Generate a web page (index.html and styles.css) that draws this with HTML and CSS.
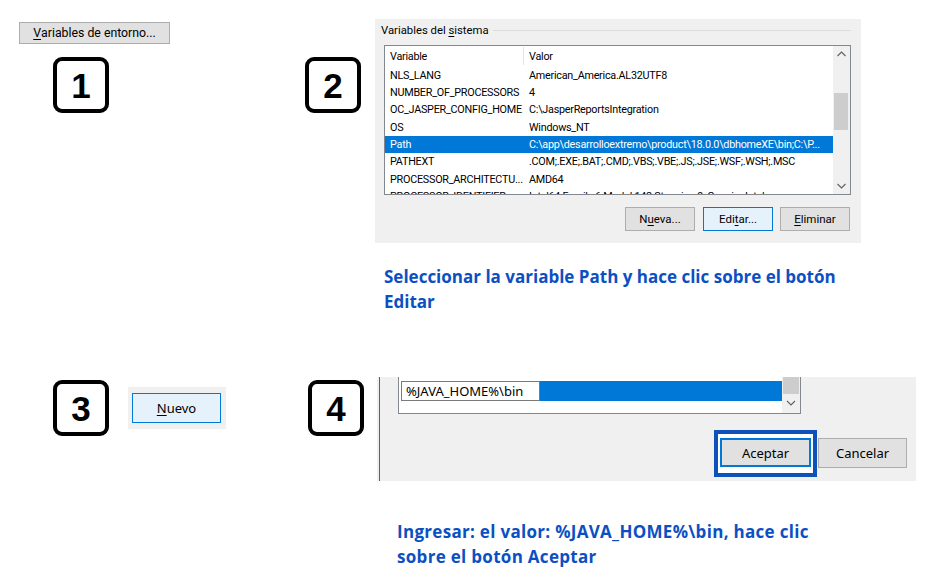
FILE: index.html
```html
<!DOCTYPE html>
<html lang="es">
<head>
<meta charset="utf-8">
<title>Variables de entorno</title>
<link rel="stylesheet" href="styles.css">
</head>
<body>
<div class="page">
  <div class="row1">
    <div class="col-a">
      <div class="win-btn env-btn"><u>V</u>ariables de entorno...</div>
      <div class="num one">1</div>
    </div>
    <div class="num two">2</div>
    <div class="col-c">
      <div class="panel-sys">
        <div class="group-head"><span class="group-title">Variables del <u>s</u>istema</span><span class="group-line"></span></div>
        <div class="listbox">
          <div class="list">
            <div class="lrow head"><span class="c1">Variable</span><span class="c2">Valor</span></div>
            <div class="lrow"><span class="c1">NLS_LANG</span><span class="c2">American_America.AL32UTF8</span></div>
            <div class="lrow"><span class="c1">NUMBER_OF_PROCESSORS</span><span class="c2">4</span></div>
            <div class="lrow"><span class="c1">OC_JASPER_CONFIG_HOME</span><span class="c2">C:\JasperReportsIntegration</span></div>
            <div class="lrow"><span class="c1">OS</span><span class="c2">Windows_NT</span></div>
            <div class="lrow sel"><span class="c1">Path</span><span class="c2">C:\app\desarrolloextremo\product\18.0.0\dbhomeXE\bin;C:\P...</span></div>
            <div class="lrow"><span class="c1">PATHEXT</span><span class="c2">.COM;.EXE;.BAT;.CMD;.VBS;.VBE;.JS;.JSE;.WSF;.WSH;.MSC</span></div>
            <div class="lrow"><span class="c1">PROCESSOR_ARCHITECTU...</span><span class="c2">AMD64</span></div>
            <div class="lrow"><span class="c1">PROCESSOR_IDENTIFIER</span><span class="c2">Intel64 Family 6 Model 142 Stepping 9, GenuineIntel</span></div>
          </div>
          <div class="vscroll">
            <svg class="chev" width="17" height="17" viewBox="0 0 17 17"><polyline points="4.5,10 8.5,6 12.5,10" fill="none" stroke="#606060" stroke-width="1.1"/></svg>
            <div class="thumb"></div>
            <div class="spacer"></div>
            <svg class="chev" width="17" height="17" viewBox="0 0 17 17"><polyline points="4.5,7 8.5,11 12.5,7" fill="none" stroke="#606060" stroke-width="1.1"/></svg>
          </div>
        </div>
        <div class="btn-row">
          <div class="win-btn sm">N<u>u</u>eva...</div>
          <div class="win-btn sm focus">Edi<u>t</u>ar...</div>
          <div class="win-btn sm"><u>E</u>liminar</div>
        </div>
      </div>
      <p class="caption cap1">Seleccionar la variable Path y hace clic sobre el botón Editar</p>
    </div>
  </div>
  <div class="row2">
    <div class="num three">3</div>
    <div class="nuevo-panel"><div class="win-btn focus nuevo"><u>N</u>uevo</div></div>
    <div class="num four">4</div>
    <div class="col-d">
      <div class="panel-ok">
        <div class="edge"></div>
        <div class="ok-body">
          <div class="listbox2">
            <div class="list2">
              <div class="edit-row"><span class="edit">%JAVA_HOME%\bin</span><span class="fill"></span></div>
            </div>
            <div class="vscroll2">
              <div class="thumb2"></div>
              <svg class="chev" width="18" height="17" viewBox="0 0 18 17"><polyline points="5,7 9,11 13,7" fill="none" stroke="#606060" stroke-width="1.1"/></svg>
            </div>
          </div>
          <div class="ok-row">
            <div class="ok-frame"><div class="win-btn big default">Aceptar</div></div>
            <div class="win-btn big cancel">Cancelar</div>
          </div>
        </div>
      </div>
      <p class="caption cap2">Ingresar: el valor: %JAVA_HOME%\bin, hace clic sobre el botón Aceptar</p>
    </div>
  </div>
</div>
</body>
</html>
```

FILE: styles.css
```css
* { box-sizing: border-box; }
html, body { margin: 0; padding: 0; background: #ffffff; }
.page {
  width: 931px;
  height: 578px;
  overflow: hidden;
  position: relative;
  font-family: Roboto, "Noto Sans", sans-serif;
  color: #000;
}
u { text-decoration: underline; text-underline-offset: 2px; }

.win-btn {
  display: flex;
  align-items: center;
  justify-content: center;
  background: #e1e1e1;
  border: 1px solid #adadad;
  font-size: 12px;
  color: #000;
  white-space: nowrap;
}
.win-btn.focus { background: #e5f1fb; border-color: #0078d7; }

.num {
  width: 56px;
  height: 56px;
  border: 4px solid #000;
  border-radius: 9px;
  display: flex;
  align-items: center;
  justify-content: center;
  font-family: "Liberation Sans", Arial, sans-serif;
  font-weight: bold;
  font-size: 35px;
  line-height: 1;
  flex: none;
}

/* row 1 */
.row1 { display: flex; height: 377px; }
.col-a { width: 305px; padding: 22px 0 0 19px; flex: none; }
.env-btn { width: 151px; height: 22px; font-size: 12.3px; }
.num.one { margin: 13px 0 0 34px; }
.num.two { margin-top: 57px; }
.col-c { margin-left: 14px; padding-top: 19px; }

.panel-sys {
  width: 486px;
  height: 224px;
  background: #f0f0f0;
  padding: 0 10px 0 0;
  display: flex;
  flex-direction: column;
}
.group-head { display: flex; align-items: center; height: 22px; padding-left: 6px; }
.group-title { font-size: 11.3px; padding-right: 4px; }
.group-line { flex: 1; height: 1px; background: #dcdcdc; margin-top: 1px; }

.listbox {
  margin: 4px 0 0 9px;
  width: 467px;
  height: 150px;
  background: #fff;
  border: 1px solid #828790;
  display: flex;
  overflow: hidden;
}
.list { flex: 1; min-width: 0; overflow: hidden; font-size: 10.8px; letter-spacing: -0.25px; }
.lrow { display: flex; height: 17.33px; align-items: center; white-space: nowrap; }
.lrow.head { height: 20.5px; }
.lrow.head .c1 { border-right: 1px solid #e5e5e5; height: 18px; display: flex; align-items: center; }
.c1 { width: 139px; padding-left: 5px; flex: none; overflow: hidden; }
.c2 { padding-left: 5px; flex: 1; min-width: 0; overflow: hidden; }
.lrow.sel { background: #0078d7; color: #fff; }

.vscroll { width: 17px; background: #f0f0f0; display: flex; flex-direction: column; flex: none; }
.chev { display: block; flex: none; }
.thumb { margin: 30px 2px 0 1px; height: 37px; background: #cdcdcd; }
.spacer { flex: 1; }

.btn-row { display: flex; justify-content: flex-end; gap: 8px; margin-top: 12px; padding-right: 1px; }
.win-btn.sm { width: 70px; height: 24px; font-size: 11.5px; }
.btn-row .win-btn.sm:last-child { margin-left: -1px; }

.caption {
  margin: 0;
  font-family: "Open Sans", "Noto Sans", sans-serif;
  font-weight: bold;
  font-size: 17px;
  line-height: 25px;
  color: #0b50c3;
}
.cap1 { margin: 21px 0 0 9px; width: 472px; }
.cap2 { margin: 38px 0 0 20px; width: 440px; letter-spacing: 0.3px; }

/* row 2 */
.row2 { display: flex; align-items: flex-start; }
.num.three { margin: 3px 0 0 53px; }
.nuevo-panel {
  margin: 10px 0 0 19px;
  width: 98px;
  height: 42px;
  background: #f0f0f0;
  padding: 6px 0 0 4px;
  flex: none;
}
.win-btn.nuevo { width: 89px; height: 30px; font-size: 13px; font-family: "Noto Sans", sans-serif; }
.num.four { margin: 3px 0 0 82px; }
.col-d { margin-left: 13px; }

.panel-ok {
  width: 539px;
  height: 104px;
  background: #f0f0f0;
  display: flex;
  font-family: "Noto Sans", sans-serif;
}
.edge { width: 1px; background: #0078d7; margin-left: 2px; flex: none; }
.ok-body { flex: 1; display: flex; flex-direction: column; padding-left: 18px; }
.listbox2 {
  width: 403px;
  height: 37px;
  background: #fff;
  border: 1px solid #828790;
  border-top: none;
  display: flex;
}
.list2 { flex: 1; padding: 4px 0 0 2px; }
.edit-row { display: flex; height: 20px; }
.edit {
  width: 139px;
  height: 20px;
  border: 1px solid #7a7a7a;
  background: #fff;
  font-size: 13px;
  line-height: 18px;
  padding-left: 4px;
  white-space: nowrap;
}
.fill { flex: 1; background: #0078d7; }
.vscroll2 { width: 18px; background: #f0f0f0; display: flex; flex-direction: column; }
.thumb2 { height: 17px; background: #cdcdcd; margin: 0 1px; }

.ok-row { display: flex; align-items: flex-start; margin: 16px 0 0 316px; }
.ok-frame {
  border: 4px solid #0d52b8;
  background: #fff;
  padding: 4px 2px 6px 2px;
}
.win-btn.big { font-size: 13px; font-family: "Noto Sans", sans-serif; }
.win-btn.default { width: 91px; height: 29px; border: 2px solid #0078d7; }
.win-btn.cancel { width: 89px; height: 30px; margin: 8px 0 0 1px; }
```
